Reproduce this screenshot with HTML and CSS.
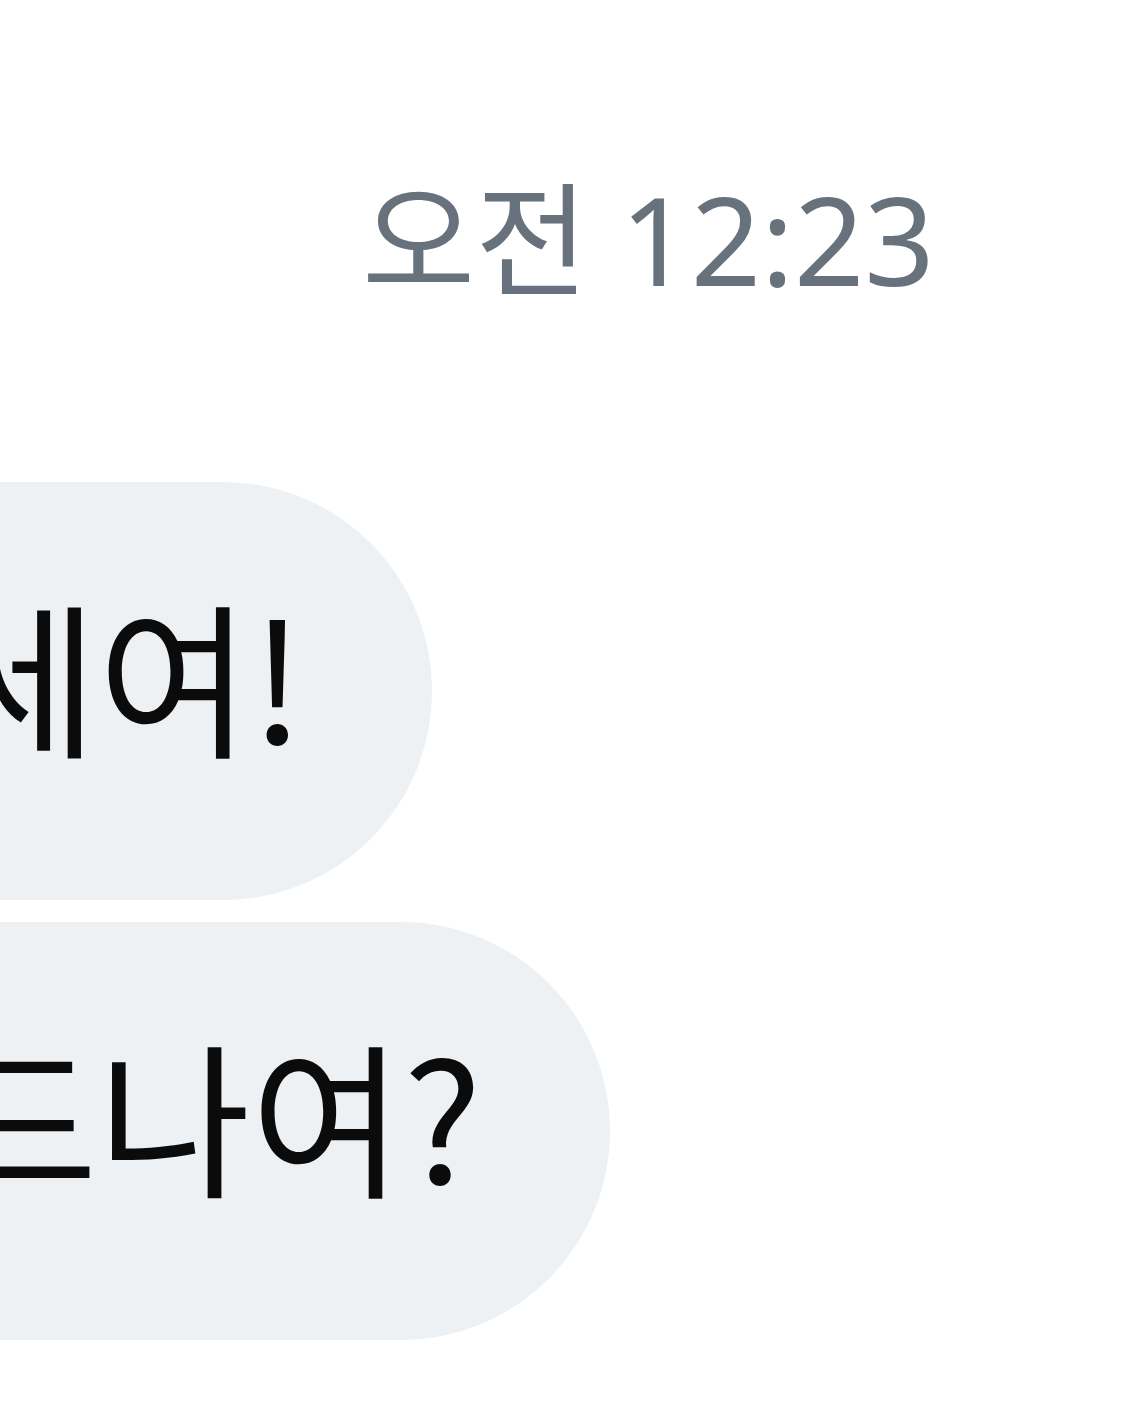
FILE: index.html
```html
<!DOCTYPE html>
<html lang="ko">
<head>
<meta charset="utf-8">
<link rel="stylesheet" href="styles.css">
</head>
<body>
<main class="chat">
  <div class="time-row"><span class="time">오전 12:23</span></div>
  <div class="msg-row row-1"><div class="bubble">안녕하세여!</div></div>
  <div class="msg-row row-2"><div class="bubble">밥 잘 드나여?</div></div>
</main>
</body>
</html>
```
FILE: styles.css
```css
html, body {
  margin: 0;
  padding: 0;
  background: #ffffff;
  width: 1125px;
  height: 1416px;
  overflow: hidden;
}
.chat {
  display: flex;
  flex-direction: column;
  font-family: "Noto Sans CJK KR", "Noto Sans", sans-serif;
}
.time-row {
  display: flex;
  justify-content: flex-start;
  padding-left: 362px;
  padding-top: 177px;
  height: 143px;
}
.time {
  font-family: "Noto Sans", "Noto Sans CJK KR", sans-serif;
  font-size: 123px;
  line-height: 1;
  color: #68727c;
  white-space: nowrap;
}
.msg-row {
  display: flex;
  justify-content: flex-end;
}
.row-1 { width: 432px; margin-top: 162px; }
.row-2 { width: 610px; margin-top: 22px; }
.bubble {
  flex: none;
  background: #eef1f4;
  color: #0b0b0b;
  font-size: 166px;
  line-height: 1;
  height: 418px;
  box-sizing: border-box;
  padding: 0 128px 36px 60px;
  display: flex;
  align-items: center;
  border-radius: 209px;
  white-space: nowrap;
}
```
